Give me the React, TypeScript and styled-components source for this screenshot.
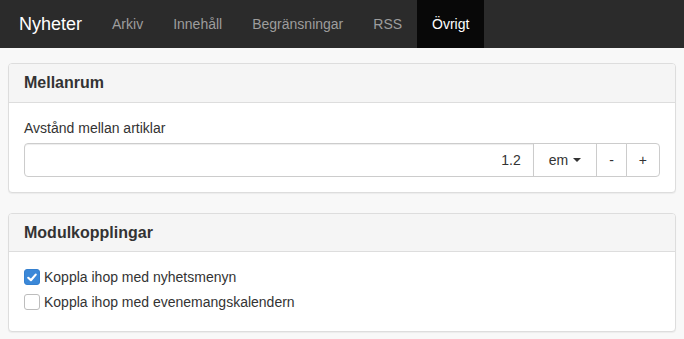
import styled, { createGlobalStyle } from "styled-components";

const GlobalStyle = createGlobalStyle`
  body {
    margin: 0;
    background: #f8f8f8;
    font-family: "Liberation Sans", Arial, sans-serif;
    color: #333;
  }
`;

const NAV_ITEMS = ["Arkiv", "Innehåll", "Begränsningar", "RSS", "Övrigt"];
const ACTIVE = "Övrigt";

const App = () => {
	return (
		<>
			<GlobalStyle />
			<Navbar>
				<Brand>Nyheter</Brand>
				{NAV_ITEMS.map((item) => (
					<NavLink key={item} $active={item === ACTIVE}>
						{item}
					</NavLink>
				))}
			</Navbar>
			<Main>
				<Panel>
					<PanelHeading>
						<PanelTitle>Mellanrum</PanelTitle>
					</PanelHeading>
					<PanelBody>
						<Label>Avstånd mellan artiklar</Label>
						<InputGroup>
							<Input defaultValue="1.2" />
							<AddonButton>
								em<Caret />
							</AddonButton>
							<AddonButton>-</AddonButton>
							<AddonButton $last>+</AddonButton>
						</InputGroup>
					</PanelBody>
				</Panel>
				<Panel>
					<PanelHeading>
						<PanelTitle>Modulkopplingar</PanelTitle>
					</PanelHeading>
					<CheckList>
						<CheckRow>
							<CheckBox $checked>
								<svg width="10" height="9" viewBox="0 0 10 9">
									<path d="M1.3 4.8 L3.9 7.2 L8.7 1.6" fill="none" stroke="#fff" strokeWidth="2.2" strokeLinecap="round" strokeLinejoin="round" />
								</svg>
							</CheckBox>
							Koppla ihop med nyhetsmenyn
						</CheckRow>
						<CheckRow>
							<CheckBox />
							Koppla ihop med evenemangskalendern
						</CheckRow>
					</CheckList>
				</Panel>
			</Main>
		</>
	);
};

const Navbar = styled.nav`
  display: flex;
  height: 48px;
  padding-left: 4px;
  background: #2b2b2b;
`;

const Brand = styled.a`
  padding: 0 15px;
  font-size: 18px;
  line-height: 48px;
  color: #fff;
`;

const NavLink = styled.a<{ $active?: boolean }>`
  padding: 0 15px;
  font-size: 14px;
  line-height: 48px;
  color: ${(p) => (p.$active ? "#fff" : "#9d9d9d")};
  background: ${(p) => (p.$active ? "#080808" : "transparent")};
`;

const Main = styled.main`
  padding: 15px 8px 0;
`;

const Panel = styled.section`
  margin-bottom: 20px;
  background: #fff;
  border: 1px solid #ddd;
  border-radius: 4px;
  box-shadow: 0 1px 1px rgba(0, 0, 0, 0.05);
  overflow: hidden;
`;

const PanelHeading = styled.header`
  padding: 10px 15px;
  background: #f5f5f5;
  border-bottom: 1px solid #ddd;
`;

const PanelTitle = styled.h3`
  margin: 0;
  font-size: 16px;
  font-weight: 700;
  line-height: 1.1;
  color: #333;
`;

const PanelBody = styled.div`
  padding: 15px;
`;

const Label = styled.label`
  display: block;
  margin-bottom: 5px;
  font-size: 14px;
  line-height: 20px;
`;

const InputGroup = styled.div`
  display: flex;
  height: 34px;
`;

const Input = styled.input`
  flex: 1;
  min-width: 0;
  padding: 6px 12px;
  border: 1px solid #ccc;
  border-radius: 4px 0 0 4px;
  font: inherit;
  font-size: 14px;
  color: #333;
  text-align: right;
  box-shadow: inset 0 1px 1px rgba(0, 0, 0, 0.075);
  outline: none;
`;

const AddonButton = styled.button<{ $last?: boolean }>`
  display: flex;
  align-items: center;
  margin-left: -1px;
  padding: 0 12px;
  background: #fff;
  border: 1px solid #ccc;
  border-radius: ${(p) => (p.$last ? "0 4px 4px 0" : "0")};
  font-family: inherit;
  font-size: 14px;
  color: #333;
  &:first-of-type {
    padding: 0 15px;
  }
`;

const Caret = styled.span`
  display: inline-block;
  width: 0;
  height: 0;
  margin-left: 5px;
  border-top: 4px solid #333;
  border-left: 4px solid transparent;
  border-right: 4px solid transparent;
`;

const CheckList = styled.div`
  display: flex;
  flex-direction: column;
  gap: 5px;
  padding: 15px 15px 19px;
`;

const CheckRow = styled.label`
  display: flex;
  align-items: center;
  gap: 4px;
  font-size: 14px;
  line-height: 20px;
`;

const CheckBox = styled.span<{ $checked?: boolean }>`
  display: inline-flex;
  align-items: center;
  justify-content: center;
  box-sizing: border-box;
  width: 16px;
  height: 16px;
  border-radius: 3px;
  background: ${(p) => (p.$checked ? "#3b88d8" : "#fff")};
  border: 1px solid ${(p) => (p.$checked ? "#3580cf" : "#bdbdbd")};
`;

export default App;
